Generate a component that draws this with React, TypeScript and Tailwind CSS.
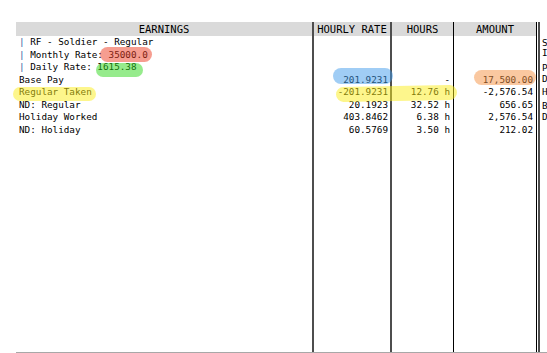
import React from "react";

const earnings: { text: React.ReactNode }[] = [
  { text: <><span className="text-[#3461a0]">|</span> RF - Soldier - Regular</> },
  { text: <><span className="text-[#3461a0]">|</span> Monthly Rate: 35000.0</> },
  { text: <><span className="text-[#3461a0]">|</span> Daily Rate: 1615.38</> },
  { text: "Base Pay" },
  { text: "Regular Taken" },
  { text: "ND: Regular" },
  { text: "Holiday Worked" },
  { text: "ND: Holiday" },
];

const hourly = ["", "", "", "201.9231", "-201.9231", "20.1923", "403.8462", "60.5769"];
const hours = ["", "", "", "-", "12.76 h", "32.52 h", "6.38 h", "3.50 h"];
const amount = ["", "", "", "17,500.00", "-2,576.54", "656.65", "2,576.54", "212.02"];

function Cell({ children, right }: { children?: React.ReactNode; right?: boolean }) {
  return (
    <div className={"h-[12.5px] leading-[12.5px] whitespace-pre " + (right ? "text-right" : "")}>
      {children || "\u00a0"}
    </div>
  );
}

function Header({ label }: { label: string }) {
  return (
    <div className="h-[14px] leading-[14px] bg-[#dadada] text-center text-[10.5px] text-black">
      {label}
    </div>
  );
}

export default function App() {
  return (
    <div
      className="relative w-[547px] h-[353px] bg-white overflow-hidden text-black"
      style={{ fontFamily: '"DejaVu Sans Mono", "Liberation Mono", monospace' }}
    >
      <div className="pt-[22px] pl-4">
        <div className="flex h-[331px] w-[700px] border-b border-[#a8a8a8] text-[9.3px]">
          {/* Earnings */}
          <div className="w-[296px] flex flex-col">
            <Header label="EARNINGS" />
            <div className="pl-[3px]">
              {earnings.map((e, i) => (
                <Cell key={i}>{e.text}</Cell>
              ))}
            </div>
          </div>
          {/* Hourly rate */}
          <div className="w-[78px] flex flex-col border-l-2 border-[#4e4e4e]">
            <Header label="HOURLY RATE" />
            <div className="pr-[2px]">
              {hourly.map((v, i) => (
                <Cell key={i} right>{v}</Cell>
              ))}
            </div>
          </div>
          {/* Hours */}
          <div className="w-[63px] flex flex-col border-l-2 border-[#4e4e4e]">
            <Header label="HOURS" />
            <div className="pr-[3px]">
              {hours.map((v, i) => (
                <Cell key={i} right>{v}</Cell>
              ))}
            </div>
          </div>
          {/* Amount */}
          <div className="w-[83px] flex flex-col border-l border-black">
            <Header label="AMOUNT" />
            <div className="pr-[3px]">
              {amount.map((v, i) => (
                <Cell key={i} right>{v}</Cell>
              ))}
            </div>
          </div>
          {/* double separator */}
          <div className="w-px bg-black" />
          <div className="w-px bg-white" />
          <div className="w-[2px] bg-[#4e4e4e]" />
          {/* right section */}
          <div className="w-[150px] pl-[2px] pt-[14px]">
            <div className="h-[12px] leading-[12px] mt-[0.5px]">S</div>
            <div className="h-[12px] leading-[12px] -mt-[1.5px]">I</div>
            <div className="h-[12px] leading-[12px] mt-[3px]">P</div>
            <div className="h-[12px] leading-[12px] -mt-px">D</div>
            <div className="h-[12px] leading-[12px] mt-px">H</div>
            <div className="h-[12px] leading-[12px] mt-[2px]">B</div>
            <div className="h-[12px] leading-[12px] -mt-px">D</div>
          </div>
        </div>
      </div>

      {/* highlighter marks */}
      <div className="absolute left-[100px] top-[47px] w-[52px] h-[15px] rounded-full bg-[rgba(237,59,33,0.5)]" />
      <div className="absolute left-[96px] top-[63px] w-[47px] h-[14px] rounded-full bg-[rgba(45,215,25,0.5)]" />
      <div className="absolute left-[13px] top-[87px] w-[83px] h-[14px] rounded-full bg-[rgba(251,237,25,0.5)]" />
      <div className="absolute left-[333px] top-[68px] w-[60px] h-[16px] rounded-full bg-[rgba(65,155,235,0.5)]" />
      <div className="absolute left-[336px] top-[86px] w-[121px] h-[15px] rounded-full -rotate-1 bg-[rgba(251,237,25,0.5)]" />
      <div className="absolute left-[474px] top-[70px] w-[62px] h-[15px] rounded-full bg-[rgba(245,145,65,0.5)]" />
    </div>
  );
}
